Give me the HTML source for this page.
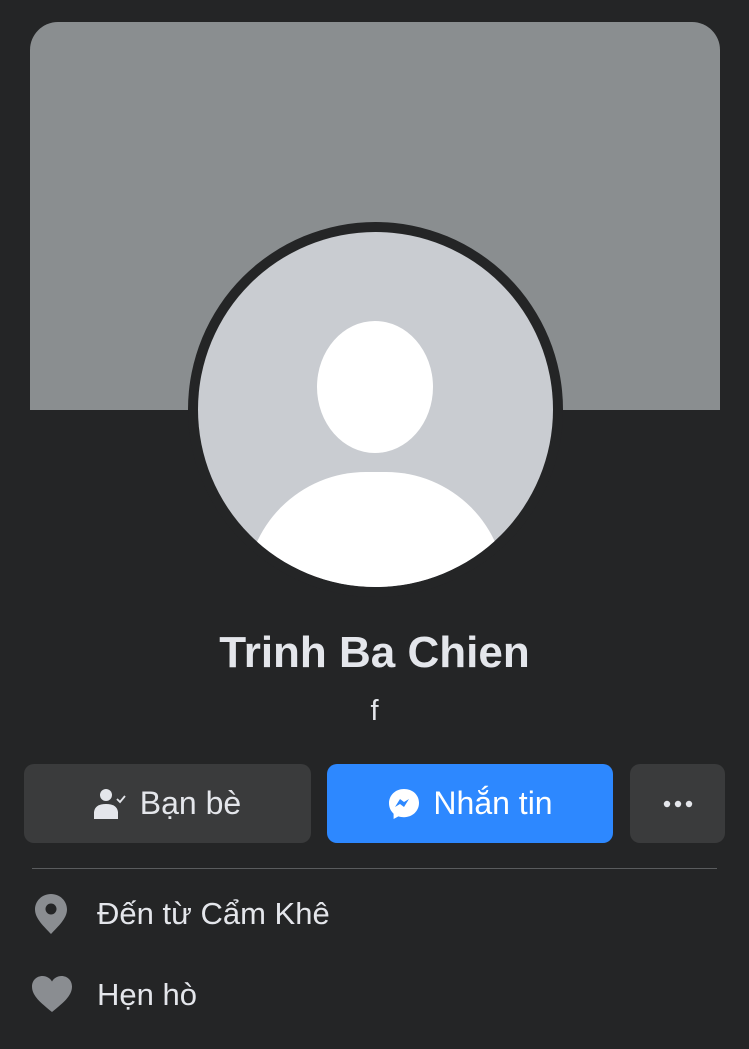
<!DOCTYPE html>
<html><head><meta charset="utf-8"><style>
body{margin:0;width:749px;height:1049px;background:#242526;position:relative;overflow:hidden;font-family:"Liberation Sans",sans-serif;color:#e4e6eb}
.cover{position:absolute;left:30px;top:22px;width:690px;height:388px;background:#8a8e90;border-radius:28px 28px 0 0}
.ring{position:absolute;left:188px;top:222px;width:375px;height:375px;border-radius:50%;background:#242526}
.av{position:absolute;left:198px;top:232px;width:355px;height:355px;border-radius:50%;background:#c9ccd1;overflow:hidden}
.head{position:absolute;left:119px;top:89px;width:116px;height:132px;border-radius:50%;background:#fff}
.bodyp{position:absolute;left:48px;top:240px;width:260px;height:260px;border-radius:120px 120px 0 0;background:#fff}
.name{position:absolute;top:628px;width:749px;text-align:center;font-size:44px;font-weight:bold}
.f{position:absolute;top:695px;width:749px;text-align:center;font-size:29px;color:#e4e6eb}
.btn{position:absolute;top:764px;height:79px;border-radius:10px;background:#3a3b3c;display:flex;align-items:center;justify-content:center;font-size:32px;gap:12px}
.div{position:absolute;left:32px;top:868px;width:685px;height:1px;background:#5a5c5e}
.row{position:absolute;left:97px;font-size:31px}
</style></head><body>
<div class="cover"></div>
<div class="ring"></div>
<div class="av"><div class="head"></div><div class="bodyp"></div></div>
<div class="name">Trinh Ba Chien</div>
<div class="f">f</div>
<div class="btn" style="left:24px;width:287px">
<svg width="34" height="34" viewBox="0 0 34 34"><circle cx="12" cy="8" r="6" fill="#e4e6eb"/><path d="M0 32 V25 Q1 17 12 17 Q23 17 24 25 V32 Z" fill="#e4e6eb"/><path d="M23 12 l3 3 l5 -6" stroke="#e4e6eb" stroke-width="1.8" fill="none"/></svg>Bạn bè</div>
<div class="btn" style="left:327px;width:286px;background:#2d88ff;color:#fff">
<svg width="34" height="34" viewBox="0 0 34 34"><path d="M17 2C8.5 2 2 8.2 2 16.3c0 4.2 1.8 7.9 4.6 10.4V32l4.8-2.6c1.8.5 3.6.8 5.6.8 8.5 0 15-6.2 15-14.3S25.5 2 17 2z" fill="#fff"/><path d="M8 20l5-8 4 3 5-3-5 8-4-3z" fill="#2d88ff"/></svg>Nhắn tin</div>
<div class="btn" style="left:630px;width:95px"><svg width="30" height="8" viewBox="0 0 30 8"><circle cx="4" cy="4" r="3.2" fill="#e4e6eb"/><circle cx="15" cy="4" r="3.2" fill="#e4e6eb"/><circle cx="26" cy="4" r="3.2" fill="#e4e6eb"/></svg></div>
<div class="div"></div>
<svg style="position:absolute;left:34px;top:893px" width="34" height="42" viewBox="0 0 34 42"><path d="M17 1C8 1 1 8 1 16.5c0 9 9 17 16 24.5C24 33.5 33 25.5 33 16.5 33 8 26 1 17 1z" fill="#8a8d91"/><circle cx="17" cy="16" r="5.5" fill="#242526"/></svg>
<div class="row" style="top:896px">Đến từ Cẩm Khê</div>
<svg style="position:absolute;left:31px;top:975px" width="42" height="38" viewBox="0 0 42 38"><path d="M21 37C10 28 1 21 1 11.5 1 5.5 5.5 1 11.5 1 15.5 1 19 3 21 6.5 23 3 26.5 1 30.5 1 36.5 1 41 5.5 41 11.5 41 21 32 28 21 37z" fill="#8a8d91"/></svg>
<div class="row" style="top:977px">Hẹn hò</div>
</body></html>
